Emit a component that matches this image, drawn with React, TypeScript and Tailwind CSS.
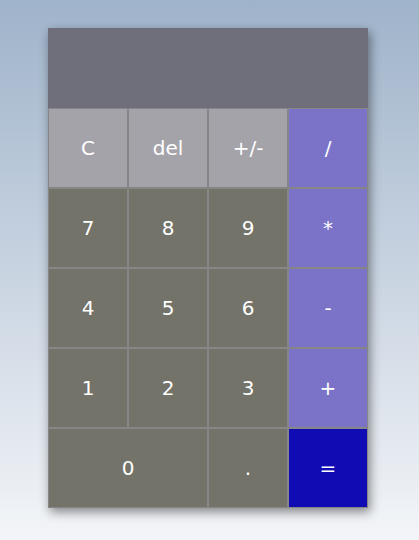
const keys: { label: string; kind: 'fn' | 'num' | 'op' | 'eq'; wide?: boolean }[] = [
  { label: 'C', kind: 'fn' },
  { label: 'del', kind: 'fn' },
  { label: '+/-', kind: 'fn' },
  { label: '/', kind: 'op' },
  { label: '7', kind: 'num' },
  { label: '8', kind: 'num' },
  { label: '9', kind: 'num' },
  { label: '*', kind: 'op' },
  { label: '4', kind: 'num' },
  { label: '5', kind: 'num' },
  { label: '6', kind: 'num' },
  { label: '-', kind: 'op' },
  { label: '1', kind: 'num' },
  { label: '2', kind: 'num' },
  { label: '3', kind: 'num' },
  { label: '+', kind: 'op' },
  { label: '0', kind: 'num', wide: true },
  { label: '.', kind: 'num' },
  { label: '=', kind: 'eq' },
];

const colors = {
  fn: 'bg-[#a5a3aa]',
  num: 'bg-[#737369]',
  op: 'bg-[#7b73c8]',
  eq: 'bg-[#110bb3]',
};

export default function App() {
  return (
    <div className="min-h-[540px] w-full bg-gradient-to-b from-[#9fb3ca] to-[#f3f5f8] pt-[28px] font-['DejaVu_Sans',Verdana,sans-serif]">
      <div className="w-[320px] ml-[48px] shadow-[2px_4px_10px_rgba(0,0,0,0.45)]">
        <div className="h-[80px] bg-[#6e6f7b]" />
        <div className="grid grid-cols-4">
          {keys.map((k) => (
            <button
              key={k.label}
              className={`${colors[k.kind]} ${k.wide ? 'col-span-2' : ''} h-[80px] border border-[#868686] text-white text-[20px] flex items-center justify-center`}
            >
              {k.label}
            </button>
          ))}
        </div>
      </div>
    </div>
  );
}
